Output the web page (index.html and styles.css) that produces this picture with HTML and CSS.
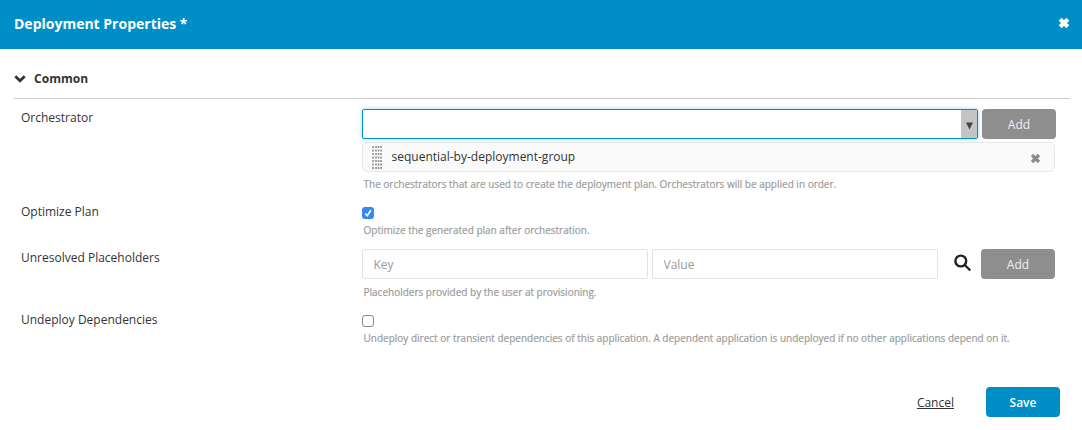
FILE: index.html
```html
<!DOCTYPE html>
<html lang="en">
<head>
<meta charset="utf-8">
<title>Deployment Properties</title>
<link rel="stylesheet" href="styles.css">
</head>
<body>
<header class="header">
  <h1 class="title">Deployment Properties *</h1>
  <svg class="close" viewBox="0 0 11 11"><path d="M2 2l7 7M9 2l-7 7"/></svg>
</header>
<main class="content">
  <div class="section">
    <svg class="chevron" viewBox="0 0 12 8"><path d="M1.300 1.300L6 5.800l4.700-4.500"/></svg>
    <h2 class="section-title">Common</h2>
  </div>
  <div class="row row-orchestrator">
    <label class="label">Orchestrator</label>
    <div class="field">
      <div class="controls">
        <div class="combo"><span class="combo-arrow"><svg viewBox="0 0 7 8"><path d="M0 .5h7L3.500 7.500z"/></svg></span></div>
        <button class="btn btn-add">Add</button>
      </div>
      <div class="item">
        <svg class="grip" viewBox="0 0 10 23"><path d="M1 0v23M4 0v23M6.500 0v23M9 0v23"/></svg>
        <span class="item-name">sequential-by-deployment-group</span>
        <svg class="remove" viewBox="0 0 11 11"><path d="M2 2l7 7M9 2l-7 7"/></svg>
      </div>
      <p class="help">The orchestrators that are used to create the deployment plan. Orchestrators will be applied in order.</p>
    </div>
  </div>
  <div class="row row-optimize">
    <label class="label">Optimize Plan</label>
    <div class="field">
      <span class="check checked"><svg viewBox="0 0 12 12"><path d="M3.200 6.500l2 2.200L8.900 3.300"/></svg></span>
      <p class="help">Optimize the generated plan after orchestration.</p>
    </div>
  </div>
  <div class="row row-placeholders">
    <label class="label">Unresolved Placeholders</label>
    <div class="field">
      <div class="controls">
        <input class="input" placeholder="Key">
        <input class="input" placeholder="Value">
        <svg class="search" viewBox="0 0 18 18"><circle cx="6.800" cy="7" r="5.400"/><path d="M10.800 11l5.500 5.500"/></svg>
        <button class="btn btn-add">Add</button>
      </div>
      <p class="help">Placeholders provided by the user at provisioning.</p>
    </div>
  </div>
  <div class="row">
    <label class="label">Undeploy Dependencies</label>
    <div class="field">
      <span class="check"></span>
      <p class="help">Undeploy direct or transient dependencies of this application. A dependent application is undeployed if no other applications depend on it.</p>
    </div>
  </div>
</main>
<footer class="footer">
  <a class="cancel">Cancel</a>
  <button class="btn btn-save">Save</button>
</footer>
</body>
</html>
```
FILE: styles.css
```css
* { box-sizing: border-box; }
body {
  margin: 0;
  height: 430px;
  display: flex;
  flex-direction: column;
  background: #fff;
  color: #333;
  font: 12px/18px "Open Sans", "Noto Sans", sans-serif;
  overflow: hidden;
}
h1, h2, p { margin: 0; }
svg { display: block; fill: none; stroke: currentColor; flex: none; }
.header {
  height: 49px;
  display: flex;
  align-items: center;
  justify-content: space-between;
  padding: 0 12px 3px 14px;
  background: #008ec6;
  color: #fff;
}
.title { padding-top: 2px; font-size: 14px; font-weight: 700; line-height: 20px; }
.close { width: 12px; height: 12px; stroke-width: 3.800; }
.content { padding: 0 12px 0 14px; flex: 1; }
.section {
  height: 50px;
  display: flex;
  align-items: center;
  gap: 8px;
  padding-top: 9px;
  border-bottom: 1px solid #ccc;
}
.section-title { padding-top: 2px; font-size: 12px; font-weight: 700; line-height: 18px; letter-spacing: 0.050px; }
.chevron { width: 12px; height: 8px; margin-top: 2px; stroke-width: 2.800; }
.row { display: flex; padding-left: 7px; }
.row-orchestrator { height: 104px; padding-top: 10px; }
.row-optimize { height: 46px; }
.row-placeholders { height: 62px; }
.label { width: 341px; flex: none; }
.field { flex: 1; }
.controls { display: flex; align-items: center; gap: 4px; }
.combo {
  width: 616px;
  height: 30px;
  display: flex;
  justify-content: flex-end;
  border: 1px solid #008ec6;
  border-radius: 2px;
  box-shadow: 0 0 5px rgba(0, 142, 198, .35);
}
.combo-arrow {
  width: 16px;
  display: flex;
  align-items: center;
  justify-content: center;
  background: #c4c4c4;
}
.combo-arrow svg { width: 7px; height: 8px; fill: #444; stroke: none; margin-top: 3px; }
.btn {
  width: 74px;
  height: 30px;
  padding: 2px 0 0;
  border: 0;
  border-radius: 4px;
  font: 12px/28px "Open Sans", "Noto Sans", sans-serif;
  color: #fff;
}
.btn-add { background: #8e8e8e; color: #eee; }
.item {
  width: 693px;
  height: 30px;
  margin-top: 3px;
  display: flex;
  align-items: center;
  padding: 0 13px 0 9px;
  background: #fafafa;
  border: 1px solid #e8e8e8;
  border-radius: 5px;
}
.grip { width: 10px; height: 23px; color: #888; stroke-width: 1.500; stroke-dasharray: 1.900 1.600; }
.item-name { flex: 1; margin-left: 9.500px; }
.remove { width: 11px; height: 11px; color: #8e8e8e; stroke-width: 3.400; margin-top: 3px; }
.help {
  margin: 4px 0 0 1.500px;
  font-size: 10px;
  line-height: 16px;
  color: #9c9c9c;
  -webkit-text-stroke: 0.200px #9c9c9c;
  white-space: nowrap;
}
.row-placeholders .help { margin-top: 5px; }
.check {
  display: block;
  width: 12px;
  height: 12px;
  margin-top: 4px;
  border: 1px solid #888;
  border-radius: 3px;
}
.check + .help { margin-top: 3px; }
.checked { border: 0; background: #3489fa; color: #fff; }
.checked svg { width: 12px; height: 12px; stroke-width: 1.700; }
.input {
  width: 286px;
  height: 30px;
  padding: 0 10.500px;
  border: 1px solid #e3e3e3;
  border-radius: 2px;
  font: 12px "Open Sans", "Noto Sans", sans-serif;
}
.input::placeholder { color: #999; opacity: 1; }
.search { width: 18px; height: 18px; margin: 0 5px 2px 12px; color: #222; stroke-width: 2.400; }
.footer {
  display: flex;
  justify-content: flex-end;
  align-items: center;
  gap: 32px;
  padding: 0 22px 13px 0;
}
.cancel { padding-top: 2px; text-decoration: underline; }
.btn-save { background: #008ec6; font-weight: 600; }
```
